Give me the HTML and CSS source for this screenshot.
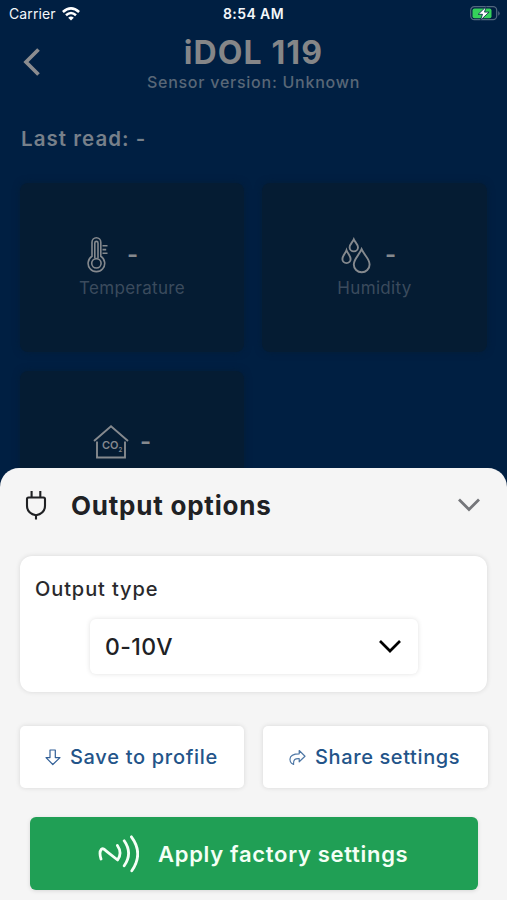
FILE: index.html
```html
<!DOCTYPE html>
<html lang="en">
<head>
<meta charset="utf-8">
<title>iDOL 119</title>
<link rel="stylesheet" href="styles.css">
</head>
<body>
<div class="screen">
  <div class="status">
    <div class="carrier"><span>Carrier</span>
      <svg width="18" height="14" viewBox="0 0 18 14" fill="none" stroke="#fff" stroke-width="2.6"><path d="M.9 5Q9-2.2 17.1 5M4 8.2Q9 3.8 14 8.2"/><path d="M9 13.6 6.2 10.7Q9 8.3 11.8 10.7Z" fill="#fff" stroke="none"/></svg>
    </div>
    <span class="clock">8:54 AM</span>
    <svg class="battery" width="31" height="15" viewBox="0 0 31 15"><rect x=".7" y=".7" width="26" height="13" rx="3.6" fill="none" stroke="#52677f" stroke-width="1.2"/><path d="M28.2 5v4.8q3-2.4 0-4.8" fill="#52677f"/><rect x="2.5" y="2.4" width="19" height="9.8" rx="2" fill="#35d15a"/><path d="M16.2.6 8.2 8.3h4.3l-2 5.9 8.6-8.1h-4.6z" fill="#fff" stroke="#001f42" stroke-width=".8"/></svg>
  </div>
  <header class="header">
    <svg class="back" width="18" height="28" viewBox="0 0 18 28" fill="none" stroke="#8b8c8f" stroke-width="3.7"><path d="M15.5 1.5 3 14 15.5 26.5"/></svg>
    <div class="heading"><h1>iDOL 119</h1><p>Sensor version: Unknown</p></div>
  </header>
  <p class="last-read">Last read: -</p>
  <main class="cards">
    <section class="card">
      <div class="reading">
        <svg width="22" height="36" viewBox="0 0 22 36" fill="none" stroke="#85898e" stroke-width="1.6"><path d="M5 19.3V5.2a4.4 4.4 0 0 1 8.8 0v14.1a8.3 8.3 0 1 1-8.8 0Z"/><path d="M7.8 21V6a1.6 1.6 0 0 1 3.2 0v15"/><circle cx="9.4" cy="26.3" r="4.7"/><path d="M15.5 8.8h5M15.5 12.6h3.7M15.5 16.3h5"/></svg>
        <span class="value">-</span>
      </div>
      <p>Temperature</p>
    </section>
    <section class="card humidity">
      <div class="reading">
        <svg width="30" height="37" viewBox="0 0 30 37" fill="none" stroke="#85898e" stroke-width="1.9"><path d="M12.8 2.3C11.5 5.3 8.6 7.5 8.6 10.2a4.2 4.2 0 0 0 8.4 0c0-2.7-2.9-4.9-4.2-7.9ZM5.5 13.2C4.3 16.7 1.4 18.7 1.4 22a4.1 4.1 0 0 0 8.2 0c0-3.3-2.9-5.3-4.1-8.8ZM20.6 12.2C18.3 18 12.8 21.9 12.8 27.4a7.9 7.9 0 0 0 15.8 0c0-5.5-5.6-9.4-8-15.2Z"/></svg>
        <span class="value">-</span>
      </div>
      <p>Humidity</p>
    </section>
    <section class="card co2">
      <div class="reading">
        <svg width="36" height="36" viewBox="0 0 36 36" fill="none" stroke="#85898e" stroke-width="1.9"><path d="M1 17 18 2.2 35 17M4 17.5V33.5H32V17.5"/><text x="9" y="25" class="formula">CO<tspan class="sub" dy="3">2</tspan></text></svg>
        <span class="value">-</span>
      </div>
    </section>
  </main>
  <section class="sheet">
    <div class="sheet-head">
      <svg width="22" height="30" viewBox="0 0 22 30" fill="none" stroke="#202124" stroke-width="2.1"><path d="M3.5 7.5h15q1.5 0 1.5 1.5v6.7q0 7.8-9 9.6-9-1.8-9-9.6V9q0-1.5 1.5-1.5Z"/><path d="M6.6 1v6M15.3 1v6M11 25v4.5"/></svg>
      <h2>Output options</h2>
      <svg class="collapse" width="24" height="14" viewBox="0 0 24 14" fill="none" stroke="#75767a" stroke-width="2.8"><path d="M2 1.5 12 11.5 22 1.5"/></svg>
    </div>
    <div class="panel">
      <label>Output type</label>
      <div class="select"><span>0-10V</span><svg width="24" height="15" viewBox="0 0 24 15" fill="none" stroke="#000" stroke-width="2.7"><path d="M2 2 12 12 22 2"/></svg></div>
    </div>
    <div class="actions">
      <button class="save"><svg width="16" height="17" viewBox="0 0 16 17" fill="none" stroke="#315f97" stroke-width="1.2" stroke-linejoin="round"><path d="M5 1h5.3v7.6H15L7.8 15.5 1 8.6h4Z"/></svg><span>Save to profile</span></button>
      <button class="share"><svg width="17" height="17" viewBox="0 0 17 17" fill="none" stroke="#4e77a5" stroke-width="1.2" stroke-linejoin="round"><path d="M10.2 1.5 16 7.2l-5.8 5.6V9.6C6.2 9.3 4.2 10.5 4.6 15.5 1.7 14.4.9 11.5 1 10 1.2 6.4 4.8 4.8 10.2 4.8Z"/></svg><span>Share settings</span></button>
    </div>
    <button class="apply"><svg width="42" height="40" viewBox="0 0 42 40" fill="none" stroke="#f4fff6" stroke-width="2.8" stroke-linecap="round" stroke-linejoin="round"><path d="M4 25Q1.8 18 4.4 15.2Q6.5 13.8 9 16.8L20.6 26Q25.6 19 20.4 11.5M27.2 6.8q8.8 12.5 0 25M34.4 2.8q12.4 16.7.4 34"/></svg><span>Apply factory settings</span></button>
  </section>
</div>
</body>
</html>
```
FILE: styles.css
```css
* { box-sizing: border-box; }
body, h1, h2, p { margin: 0; }
body { font-family: Inter, "Liberation Sans", sans-serif; background: #001f42; }
svg { display: block; flex: none; }
.screen { width: 507px; height: 900px; overflow: hidden; display: flex; flex-direction: column; background: #001f42; }
.status { height: 28px; flex: none; display: grid; grid-template-columns: 1fr auto 1fr; align-items: center; padding: 0 6px 1px 9px; color: #f4f7fa; font-size: 14px; }
.carrier { display: flex; gap: 6px; align-items: center; letter-spacing: .1px; }
.clock { font-weight: 600; letter-spacing: .4px; margin-right: 3px; }
.battery { justify-self: end; }
.header { height: 94px; flex: none; display: grid; grid-template-columns: 60px 1fr 60px; }
.back { margin: 20px 0 0 23px; }
.heading { text-align: center; color: #858688; }
h1 { font-size: 32px; line-height: 40px; margin-top: 5px; font-weight: 700; letter-spacing: 1.1px; }
.heading p { color: #596777; font-size: 16px; line-height: 20px; font-weight: 500; letter-spacing: .75px; white-space: nowrap; margin-top: -1px; }
.last-read { margin: 4px 0 0 21px; height: 26px; flex: none; line-height: 26px; font-size: 20.5px; font-weight: 600; color: #77808a; letter-spacing: 1.05px; }
.value { font-size: 24px; line-height: 30px; font-weight: 600; color: #85898e; }
.cards { display: grid; grid-template-columns: 224px 225px; grid-auto-rows: 169px; gap: 19px 18px; margin: 31px 20px 0; height: 285px; flex: none; }
.card { background: #051c33; border-radius: 8px; box-shadow: 0 0 7px #041d37; padding-top: 53px; }
.reading { display: flex; align-items: center; gap: 18px; height: 38px; margin-left: 67px; }
.card p { font-size: 17px; line-height: 24px; text-align: center; color: #3b4b5d; letter-spacing: .35px; margin-top: 2px; }
.humidity .reading { gap: 14px; margin-left: 79px; }
.co2 .reading { gap: 11px; margin-left: 73px; }
.co2 { padding-top: 52px; }
.formula { font-size: 11px; font-weight: 600; fill: #85898e; stroke: none; }
.sub { font-size: 6px; }
.sheet { height: 432px; flex: none; background: #f5f5f5; border-radius: 19px 19px 0 0; padding: 0 20px; }
.sheet-head { height: 74px; display: flex; align-items: center; padding: 0 6px 0 5px; }
h2 { font-size: 26px; line-height: 34px; font-weight: 700; color: #202124; margin: 2px 0 0 24px; letter-spacing: .78px; }
.collapse { margin-left: auto; }
.panel { height: 136px; margin-top: 14px; background: #fff; border-radius: 12px; box-shadow: 0 0 5px #0000001f; padding: 20px 15px; }
label { display: block; font-size: 20px; line-height: 26px; font-weight: 500; color: #29292c; letter-spacing: .9px; }
.select { width: 328px; height: 55px; margin: 17px 0 0 55px; padding: 0 16px 0 15px; border-radius: 6px; background: #fff; box-shadow: 0 0 5px #0000001f; display: flex; align-items: center; justify-content: space-between; font-size: 23px; font-weight: 500; color: #202124; letter-spacing: .4px; }
.actions { display: grid; grid-template-columns: 224px 225px; gap: 19px; margin-top: 34px; }
button { font-family: inherit; border: 0; display: flex; align-items: center; padding: 0; white-space: nowrap; }
.save, .share { height: 62px; border-radius: 5px; background: #fff; box-shadow: 0 0 5px #0000001f; color: #235489; font-size: 20px; gap: 9px; padding-left: 25px; font-weight: 500; letter-spacing: .7px; }
.share { padding-left: 26px; letter-spacing: .62px; }
.apply { width: 448px; height: 73px; margin: 29px 0 0 10px; border-radius: 6px; background: #209f55; color: #f4fff6; padding-left: 67px; gap: 19px; font-size: 22px; font-weight: 600; letter-spacing: .7px; box-shadow: 0 1px 4px #0000001f; }
```
